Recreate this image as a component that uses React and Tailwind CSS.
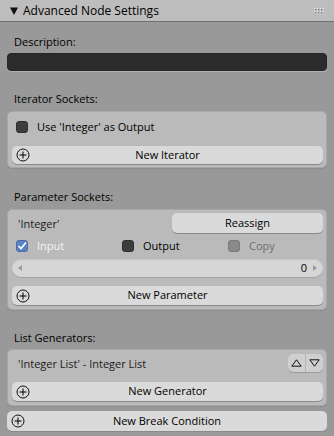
import React from 'react';

function PlusIcon() {
  return (
    <svg width="14" height="14" viewBox="0 0 14 14" className="shrink-0">
      <circle cx="7" cy="7" r="6" fill="none" stroke="#111" strokeWidth="1" />
      <line x1="7" y1="3.5" x2="7" y2="10.5" stroke="#111" strokeWidth="1.1" />
      <line x1="3.5" y1="7" x2="10.5" y2="7" stroke="#111" strokeWidth="1.1" />
    </svg>
  );
}

function OpButton({ label, className = '' }) {
  return (
    <div className={`relative flex items-center justify-center rounded-[5px] bg-[#dadada] shadow-[0_1px_0_#8a8a8a] ${className}`}>
      <div className="absolute left-[4px] top-1/2 -translate-y-1/2 flex">
        <PlusIcon />
      </div>
      <span className="text-[11px] text-black">{label}</span>
    </div>
  );
}

function Checkbox({ checked, disabled }) {
  if (checked) {
    return (
      <div className="w-[12px] h-[12px] rounded-[3px] bg-[#5a82c4] border border-[#4a6aa0] flex items-center justify-center">
        <svg width="10" height="10" viewBox="0 0 10 10">
          <polyline points="1.5,5 4,7.5 9,1.5" fill="none" stroke="#fff" strokeWidth="1.6" />
        </svg>
      </div>
    );
  }
  return (
    <div
      className={`w-[12px] h-[12px] rounded-[3px] border ${
        disabled ? 'bg-[#8a8a8a] border-[#7a7a7a]' : 'bg-[#3d3d3d] border-[#2e2e2e]'
      }`}
    />
  );
}

function Label({ children, className = '' }) {
  return <div className={`h-[16px] flex items-center pl-[7px] text-[11px] text-black ${className}`}>{children}</div>;
}

function Box({ children, className = '' }) {
  return (
    <div className={`rounded-[5px] bg-[#bababa] border border-[#a8a8a8] shadow-[0_1px_1px_#8c8c8c] pl-[4px] pr-[3px] ${className}`}>
      {children}
    </div>
  );
}

export default function App() {
  return (
    <div
      className="w-[334px] h-[436px] overflow-hidden bg-[#999999] select-none"
      style={{ fontFamily: '"Open Sans", "DejaVu Sans", sans-serif' }}
    >
      {/* Panel header */}
      <div className="h-[22px] bg-[#bdbdbd] border-b border-[#707070] flex items-center pl-[10px] pr-[10px]">
        <svg width="8" height="8" viewBox="0 0 8 8" className="shrink-0">
          <polygon points="0,0.5 8,0.5 4,8" fill="#111" />
        </svg>
        <span className="ml-[5px] text-[12px] text-black leading-none">Advanced Node Settings</span>
        <svg width="10" height="6" viewBox="0 0 10 6" className="ml-auto">
          {[0, 1, 2, 3].map((i) => (
            <g key={i}>
              <rect x={i * 3} y="0" width="1" height="1" fill="#f2f2f2" />
              <rect x={i * 3} y="3" width="1" height="1" fill="#f2f2f2" />
              <rect x={i * 3 + 1} y="1" width="1" height="1" fill="#7a7a7a" />
              <rect x={i * 3 + 1} y="4" width="1" height="1" fill="#7a7a7a" />
            </g>
          ))}
        </svg>
      </div>

      <div className="px-[7px]">
        <Label className="mt-[12px]">Description:</Label>
        <div className="mt-[3px] h-[18px] rounded-[4px] bg-[#2b2b2b] border border-[#262626] shadow-[0_1px_0_#b0b0b0]" />

        <Label className="mt-[20px]">Iterator Sockets:</Label>
        <Box className="mt-[4px] pt-[5px] pb-[3px]">
          <div className="h-[20px] flex items-center pl-[4px] gap-[9px]">
            <Checkbox />
            <span className="text-[11px] text-black">Use 'Integer' as Output</span>
          </div>
          <OpButton label="New Iterator" className="mt-[9px] h-[18px]" />
        </Box>

        <Label className="mt-[21px]">Parameter Sockets:</Label>
        <Box className="mt-[4px] pt-[3px] pb-[4px]">
          <div className="h-[20px] flex items-center">
            <span className="flex-1 pl-[6px] pt-[2px] text-[11px] text-[#1a1a1a]">'Integer'</span>
            <div className="w-[151px] h-[20px] rounded-[5px] bg-[#dadada] shadow-[0_1px_0_#8a8a8a] flex items-center justify-center text-[11px] text-black">
              Reassign
            </div>
          </div>
          <div className="mt-[3px] h-[20px] grid grid-cols-[106px_106px_1fr] items-center pl-[4px]">
            <div className="flex items-center gap-[9px]">
              <Checkbox checked />
              <span className="text-[11px] text-[#f4f4f4]">Input</span>
            </div>
            <div className="flex items-center gap-[9px]">
              <Checkbox />
              <span className="text-[11px] text-black">Output</span>
            </div>
            <div className="flex items-center gap-[9px]">
              <Checkbox disabled />
              <span className="text-[11px] text-[#6e6e6e]">Copy</span>
            </div>
          </div>
          <div className="mt-[3px] h-[18px] rounded-[9px] bg-[#d6d6d6] shadow-[inset_0_1px_1px_#c4c4c4,0_1px_0_#a5a5a5] flex items-center px-[6px]">
            <svg width="4" height="6" viewBox="0 0 4 6">
              <polygon points="4,0 4,6 0,3" fill="#9a9a9a" />
            </svg>
            <span className="ml-auto text-[11px] text-black">0</span>
            <svg width="4" height="6" viewBox="0 0 4 6" className="ml-[6px]">
              <polygon points="0,0 0,6 4,3" fill="#9a9a9a" />
            </svg>
          </div>
          <OpButton label="New Parameter" className="mt-[9px] h-[19px]" />
        </Box>

        <Label className="mt-[20px]">List Generators:</Label>
        <Box className="mt-[3px] pt-[4px] pb-[4px]">
          <div className="h-[18px] flex items-center">
            <span className="flex-1 pl-[6px] pt-[2px] text-[11px] text-[#1a1a1a]">'Integer List' - Integer List</span>
            <div className="flex h-[18px] rounded-[5px] bg-[#cfcfcf] shadow-[0_1px_0_#9a9a9a] overflow-hidden">
              <div className="w-[18px] flex items-center justify-center border-r border-[#b5b5b5]">
                <svg width="11" height="8" viewBox="0 0 11 8">
                  <polygon points="5.5,0.8 10.2,7.2 0.8,7.2" fill="none" stroke="#111" strokeWidth="1" />
                </svg>
              </div>
              <div className="w-[17px] flex items-center justify-center">
                <svg width="11" height="8" viewBox="0 0 11 8">
                  <polygon points="0.8,0.8 10.2,0.8 5.5,7.2" fill="none" stroke="#111" strokeWidth="1" />
                </svg>
              </div>
            </div>
          </div>
          <OpButton label="New Generator" className="mt-[10px] h-[19px]" />
        </Box>

        <OpButton label="New Break Condition" className="mt-[5px] h-[20px]" />
      </div>
    </div>
  );
}
